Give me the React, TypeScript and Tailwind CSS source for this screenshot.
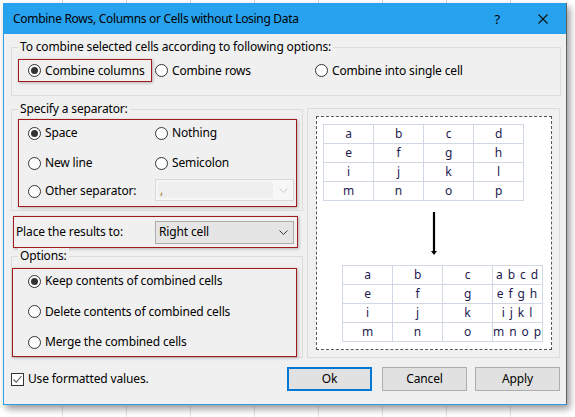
import React from "react";

const Radio = ({ checked }: { checked?: boolean }) => (
  <span className="flex h-[13px] w-[13px] shrink-0 items-center justify-center rounded-full border border-[#333333] bg-white">
    {checked && <span className="h-[7px] w-[7px] rounded-full bg-[#333333]" />}
  </span>
);

const RadioLabel = ({ checked, label }: { checked?: boolean; label: string }) => (
  <div className="flex h-[16px] items-center gap-[4px] whitespace-nowrap">
    <Radio checked={checked} />
    <span className="leading-[16px]">{label}</span>
  </div>
);

const Chevron = ({ color }: { color: string }) => (
  <svg width="9" height="5" viewBox="0 0 9 5" className="shrink-0">
    <path d="M0.5 0.5 L4.5 4.5 L8.5 0.5" fill="none" stroke={color} strokeWidth="1" />
  </svg>
);

const topRows = [
  ["a", "b", "c", "d"],
  ["e", "f", "g", "h"],
  ["i", "j", "k", "l"],
  ["m", "n", "o", "p"],
];
const bottomRows = [
  ["a", "b", "c", "a b c d"],
  ["e", "f", "g", "e f g h"],
  ["i", "j", "k", "i j k l"],
  ["m", "n", "o", "m n o p"],
];

const Table = ({ rows }: { rows: string[][] }) => (
  <div className="flex w-[201px] flex-col border-l border-t border-[#d0d7e5] bg-white">
    {rows.map((r, i) => (
      <div key={i} className="flex">
        {r.map((c, j) => (
          <div
            key={j}
            className={
              j === 3 && c.length > 1
                ? "flex h-[19px] w-[50px] items-center justify-center whitespace-pre border-b border-r border-[#d0d7e5] text-[12px] leading-[16px] tracking-[0.9px] text-[#1d1a4f]"
                : "flex h-[19px] w-[50px] items-center justify-center whitespace-pre border-b border-r border-[#d0d7e5] text-[12px] leading-[16px] text-[#1d1a4f]"
            }
          >
            {c}
          </div>
        ))}
      </div>
    ))}
  </div>
);

const gridXs = [62, 126, 190, 254, 318, 382, 446, 510];

export default function App() {
  return (
    <div
      className="relative h-[417px] w-[575px] overflow-hidden bg-white text-[12px] tracking-[-0.15px] text-black"
      style={{ fontFamily: '"Noto Sans", "Open Sans", sans-serif' }}
    >
      {gridXs.map((x) => (
        <div key={x} className="absolute top-0 h-[3px] w-[1px] bg-[#d6d6d6]" style={{ left: x }} />
      ))}
      {gridXs.map((x) => (
        <div key={"b" + x} className="absolute top-[406px] h-[11px] w-[1px] bg-[#e2e2e2]" style={{ left: x }} />
      ))}

      <div className="relative ml-[3px] mt-[3px] flex h-[402px] w-[564px] flex-col border-b border-l border-r border-b-[#2a9fe8] border-l-[#2a9fe8] border-r-[#5f5f5f] bg-[#f0f0f0] shadow-[3px_4px_7px_rgba(0,0,0,0.4)]">
        {/* Title bar */}
        <div className="flex h-[31px] shrink-0 items-center bg-[#27a2ee] pl-[9px] pr-[18px]">
          <span className="leading-[16px] tracking-[-0.3px]">Combine Rows, Columns or Cells without Losing Data</span>
          <span className="ml-auto text-[13px] leading-[16px]">?</span>
          <svg width="10" height="10" viewBox="0 0 10 10" className="ml-[38px]">
            <path d="M0.5 0.5 L9.5 9.5 M9.5 0.5 L0.5 9.5" stroke="#111" strokeWidth="1.1" />
          </svg>
        </div>

        {/* Body */}
        <div className="flex flex-1 flex-col pl-[7px]">
          {/* Top group */}
          <div className="relative mt-[13px] h-[49px] w-[550px] border border-[#dcdcdc]">
            <span className="absolute left-[6px] top-[-9px] bg-[#f0f0f0] px-[2px] leading-[16px]">
              To combine selected cells according to following options:
            </span>
            <div className="ml-[6px] mt-[11px] flex items-center">
              <div className="flex h-[23px] w-[134px] items-center border border-[#a3181c] pl-[9px] shadow-[1px_1px_3px_rgba(0,0,0,0.25)]">
                <RadioLabel checked label="Combine columns" />
              </div>
              <div className="ml-[3px] w-[160px]">
                <RadioLabel label="Combine rows" />
              </div>
              <RadioLabel label="Combine into single cell" />
            </div>
          </div>

          {/* Middle */}
          <div className="mt-[12px] flex items-start">
            <div className="mt-[1px] flex w-[292px] flex-col">
              {/* Separator group */}
              <div className="relative h-[102px] border border-[#dcdcdc]">
                <span className="absolute left-[6px] top-[-9px] bg-[#f0f0f0] px-[2px] leading-[16px]">
                  Specify a separator:
                </span>
                <div className="ml-[6px] mt-[9px] h-[88px] w-[279px] border border-[#a3181c] pl-[9px] pt-[5px] shadow-[1px_1px_3px_rgba(0,0,0,0.25)]">
                  <div className="grid grid-cols-[127px_1fr]">
                    <RadioLabel checked label="Space" />
                    <RadioLabel label="Nothing" />
                  </div>
                  <div className="mt-[14px] grid grid-cols-[127px_1fr]">
                    <RadioLabel label="New line" />
                    <RadioLabel label="Semicolon" />
                  </div>
                  <div className="mt-[8px] grid grid-cols-[127px_1fr] items-start">
                    <div className="mt-[4px]">
                      <RadioLabel label="Other separator:" />
                    </div>
                    <div className="flex h-[22px] w-[139px] items-center border border-[#d9d9d9] bg-[#f7f7f7] pl-[2px] pr-[5px]">
                      <div className="flex h-[16px] w-[115px] items-center bg-[#efefef] pl-[2px] text-[#9a7a2a] leading-[16px]">
                        ,
                      </div>
                      <div className="ml-auto">
                        <Chevron color="#c4c4c4" />
                      </div>
                    </div>
                  </div>
                </div>
              </div>

              {/* Place */}
              <div className="ml-[2px] mt-[5px] flex h-[32px] w-[285px] items-center border border-[#a3181c] pl-[2px] shadow-[1px_1px_3px_rgba(0,0,0,0.25)]">
                <span className="w-[139px] leading-[16px]">Place the results to:</span>
                <div className="flex h-[23px] w-[139px] items-center border border-[#adadad] bg-[#e5e5e5] pl-[3px] pr-[5px]">
                  <span className="leading-[16px]">Right cell</span>
                  <div className="ml-auto">
                    <Chevron color="#333" />
                  </div>
                </div>
              </div>

              {/* Options group */}
              <div className="relative mt-[8px] h-[102px] border border-[#dcdcdc]">
                <span className="absolute left-[6px] top-[-9px] bg-[#f0f0f0] px-[2px] leading-[16px]">
                  Options:
                </span>
                <div className="mt-[11px] flex h-[89px] w-[285px] flex-col gap-[14.5px] border border-[#a3181c] pl-[15px] pt-[4px] shadow-[1px_1px_3px_rgba(0,0,0,0.25)]">
                  <RadioLabel checked label="Keep contents of combined cells" />
                  <RadioLabel label="Delete contents of combined cells" />
                  <RadioLabel label="Merge the combined cells" />
                </div>
              </div>
            </div>

            {/* Preview group */}
            <div className="ml-[4px] h-[250px] w-[253px] border border-[#dcdcdc]">
              <div className="ml-[8px] mt-[7px] flex h-[234px] w-[236px] flex-col border border-dashed border-[#555555] bg-white">
                <div className="ml-[6px] mt-[7px]">
                  <Table rows={topRows} />
                </div>
                <svg width="10" height="44" viewBox="0 0 10 44" className="ml-[112px] mt-[11px]">
                  <path d="M5 0 V40" stroke="#000" strokeWidth="2.2" />
                  <path d="M2 39 L8 39 L5 43 Z" fill="#000" />
                </svg>
                <div className="ml-[25px] mt-[9px]">
                  <Table rows={bottomRows} />
                </div>
              </div>
            </div>
          </div>

          {/* Bottom row */}
          <div className="mr-[6px] mt-[9px] flex items-center">
            <div className="flex items-center gap-[4px]">
              <span className="flex h-[13px] w-[13px] items-center justify-center border border-[#333333] bg-white">
                <svg width="11" height="11" viewBox="0 0 11 11">
                  <path d="M1.5 5.5 L4.2 8.3 L9.5 2" fill="none" stroke="#555" strokeWidth="1.1" />
                </svg>
              </span>
              <span className="leading-[16px]">Use formatted values.</span>
            </div>
            <div className="ml-auto flex items-center">
              <button className="flex h-[24px] w-[85px] items-center justify-center border-2 border-[#0078d7] bg-[#e1e1e1] leading-[16px]">
                Ok
              </button>
              <button className="ml-[10px] flex h-[24px] w-[85px] items-center justify-center border border-[#adadad] bg-[#e1e1e1] leading-[16px]">
                Cancel
              </button>
              <button className="ml-[8px] flex h-[24px] w-[85px] items-center justify-center border border-[#adadad] bg-[#e1e1e1] leading-[16px]">
                Apply
              </button>
            </div>
          </div>
        </div>
      </div>
    </div>
  );
}
